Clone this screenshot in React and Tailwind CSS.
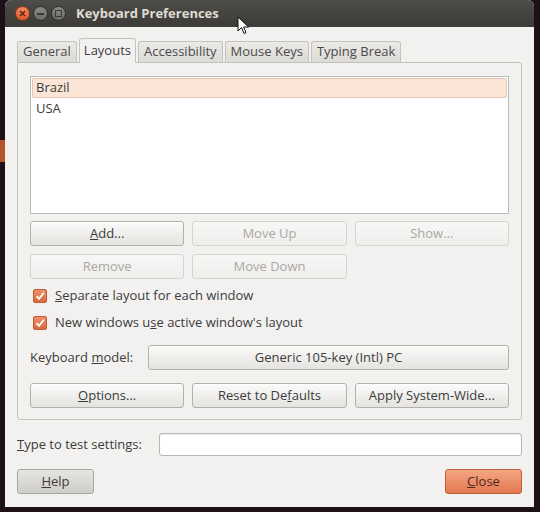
import React from 'react';

const font = { fontFamily: '"Open Sans", "DejaVu Sans", sans-serif' };

function Btn({ children, disabled, className = '' }) {
    return (
        <div
            className={`h-[25px] flex items-center justify-center rounded-[3px] border text-[13px] ${
                disabled
                    ? 'border-[#d6d4d0] bg-gradient-to-b from-[#f7f7f6] to-[#efeeec] text-[#aaa8a4]'
                    : 'border-[#b3b1ac] bg-gradient-to-b from-[#fbfbfa] to-[#e4e3e0] text-[#3c3c3c] shadow-[inset_0_1px_0_#ffffff]'
            } ${className}`}
        >
            {children}
        </div>
    );
}

function Check({ children }) {
    return (
        <div className="flex items-center gap-[8px] h-[18px]">
            <div className="w-[14px] h-[14px] rounded-[2px] bg-gradient-to-b from-[#ee9068] to-[#d96a3f] border border-[#c25a33] flex items-center justify-center">
                <svg width="10" height="10" viewBox="0 0 10 10">
                    <path d="M1.5 5.2 L4 7.8 L8.8 1.8" fill="none" stroke="#ffffff" strokeWidth="1.8" />
                </svg>
            </div>
            <span className="text-[13px] text-[#3c3c3c]">{children}</span>
        </div>
    );
}

const tabs = ['General', 'Layouts', 'Accessibility', 'Mouse Keys', 'Typing Break'];

export default function App() {
    return (
        <div className="w-[540px] h-[512px] bg-[#1c1116] relative overflow-hidden" style={font}>
            {/* bit of desktop showing on the left */}
            <div className="absolute left-0 top-[140px] w-[5px] h-[22px] bg-[#b5532a]" />

            <div className="absolute left-[5px] top-0 w-[529px] h-[507px] bg-[#f2f1f0] rounded-t-[6px] overflow-hidden flex flex-col">
                {/* Title bar */}
                <div className="h-[27px] bg-gradient-to-b from-[#4d4c48] to-[#3c3b37] flex items-center pl-[10px] gap-[3px] shrink-0">
                    <div className="w-[15px] h-[15px] rounded-full bg-gradient-to-b from-[#f5875a] to-[#df5b2c] border border-[#8a3a1c] flex items-center justify-center">
                        <svg width="7" height="7" viewBox="0 0 7 7">
                            <path d="M1 1 L6 6 M6 1 L1 6" stroke="#5a2210" strokeWidth="1.4" />
                        </svg>
                    </div>
                    <div className="w-[15px] h-[15px] rounded-full bg-gradient-to-b from-[#8d8b86] to-[#6c6a66] border border-[#2f2e2b] flex items-center justify-center">
                        <div className="w-[7px] h-[2px] bg-[#3a3936]" />
                    </div>
                    <div className="w-[15px] h-[15px] rounded-full bg-gradient-to-b from-[#8d8b86] to-[#6c6a66] border border-[#2f2e2b] flex items-center justify-center">
                        <div className="w-[7px] h-[7px] border-[1.5px] border-[#3a3936]" />
                    </div>
                    <span className="ml-[7px] text-[13px] font-bold text-[#dfdbd2]">Keyboard Preferences</span>
                </div>

                {/* Body */}
                <div className="flex-1 px-[12px] pt-[11px] flex flex-col">
                    {/* Tabs */}
                    <div className="flex items-end h-[24px] gap-[2px] relative z-10">
                        {tabs.map((t) =>
                            t === 'Layouts' ? (
                                <div
                                    key={t}
                                    className="h-[25px] -mb-px px-[4px] flex items-center bg-[#f2f1f0] border border-b-0 border-[#c4c2bd] rounded-t-[3px] text-[13px] text-[#3c3c3c]"
                                >
                                    {t}
                                </div>
                            ) : (
                                <div
                                    key={t}
                                    className="h-[21px] px-[5px] flex items-center bg-gradient-to-b from-[#ebeae8] to-[#dcdad6] border border-b-0 border-[#c4c2bd] rounded-t-[3px] text-[13px] text-[#4a4a4a]"
                                >
                                    {t}
                                </div>
                            )
                        )}
                    </div>

                    {/* Notebook panel */}
                    <div className="h-[358px] w-[505px] border border-[#c4c2bd] rounded-b-[3px] rounded-tr-[3px] px-[12px] pt-[13px] flex flex-col">
                        {/* List */}
                        <div className="h-[138px] border border-[#bdbbb6] bg-white p-px">
                            <div className="h-[20px] flex items-center px-[3px] bg-[#fce4d7] border border-[#e6c7b7] rounded-[2px] text-[13px] text-[#3c3c3c]">
                                Brazil
                            </div>
                            <div className="h-[22px] flex items-center px-[4px] text-[13px] text-[#3c3c3c]">USA</div>
                        </div>

                        <div className="grid grid-cols-3 gap-x-[8px] gap-y-[8px] mt-[7px]">
                            <Btn>
                                <span><u>A</u>dd...</span>
                            </Btn>
                            <Btn disabled>Move Up</Btn>
                            <Btn disabled>Show...</Btn>
                            <Btn disabled>Remove</Btn>
                            <Btn disabled>Move Down</Btn>
                        </div>

                        <div className="mt-[8px] flex flex-col gap-[9px] pl-[3px]">
                            <Check>
                                <u>S</u>eparate layout for each window
                            </Check>
                            <Check>
                                New windows u<u>s</u>e active window's layout
                            </Check>
                        </div>

                        <div className="mt-[13px] flex items-center">
                            <span className="w-[118px] text-[13px] text-[#3c3c3c]">
                                Keyboard <u>m</u>odel:
                            </span>
                            <Btn className="flex-1">Generic 105-key (Intl) PC</Btn>
                        </div>

                        <div className="grid grid-cols-3 gap-x-[8px] mt-[13px]">
                            <Btn>
                                <span><u>O</u>ptions...</span>
                            </Btn>
                            <Btn>
                                <span>Reset to De<u>f</u>aults</span>
                            </Btn>
                            <Btn>Apply System-Wide...</Btn>
                        </div>
                    </div>

                    {/* Test entry */}
                    <div className="mt-[13px] flex items-center h-[23px]">
                        <span className="w-[142px] text-[13px] text-[#3c3c3c]">
                            <u>T</u>ype to test settings:
                        </span>
                        <div className="flex-1 h-[23px] border border-[#b8b6b1] rounded-[3px] bg-white shadow-[inset_0_1px_1px_rgba(0,0,0,0.08)]" />
                    </div>

                    {/* Bottom buttons */}
                    <div className="mt-[13px] flex justify-between">
                        <div className="w-[77px] h-[25px] flex items-center justify-center rounded-[3px] border border-[#a9a7a2] bg-gradient-to-b from-[#e6e5e2] to-[#cfcdc9] text-[13px] text-[#3c3c3c]">
                            <span><u>H</u>elp</span>
                        </div>
                        <div className="w-[77px] h-[25px] flex items-center justify-center rounded-[3px] border border-[#c0603a] bg-gradient-to-b from-[#f4a582] to-[#e37850] text-[13px] text-[#4a2a1c]">
                            <span><u>C</u>lose</span>
                        </div>
                    </div>
                </div>
            </div>

            {/* Mouse pointer */}
            <svg className="absolute left-[237px] top-[16px]" width="14" height="20" viewBox="0 0 14 20">
                <path d="M1 1 L1 15 L4.5 11.5 L7 17.5 L9 16.6 L6.6 11 L11.5 11 Z" fill="#ffffff" stroke="#111111" strokeWidth="1" strokeLinejoin="round" />
            </svg>
        </div>
    );
}
